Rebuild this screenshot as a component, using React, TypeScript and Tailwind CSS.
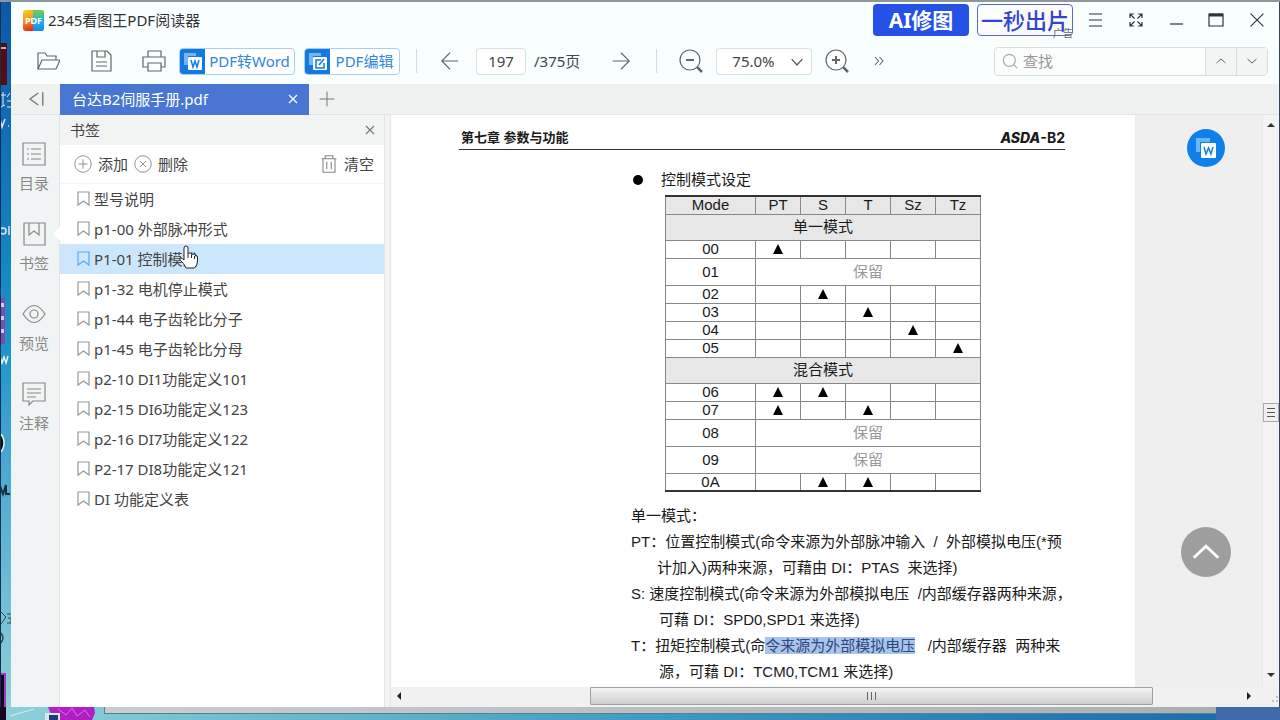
import { FC, ReactNode } from "react";

interface IconProps {
    className?: string;
    children: ReactNode;
    size?: number;
}

// thin line icons drawn on a 24px grid
const Icon: FC<IconProps> = ({ className = "", size = 24, children }) => (
    <svg
        width={size}
        height={size}
        viewBox="0 0 24 24"
        fill="none"
        stroke="currentColor"
        strokeWidth="1.2"
        className={`shrink-0 ${className}`}
        aria-hidden="true"
    >
        {children}
    </svg>
);

const bookmarks = [
    "型号说明",
    "p1-00 外部脉冲形式",
    "P1-01 控制模式",
    "p1-32 电机停止模式",
    "p1-44 电子齿轮比分子",
    "p1-45 电子齿轮比分母",
    "p2-10 DI1功能定义101",
    "p2-15 DI6功能定义123",
    "p2-16 DI7功能定义122",
    "P2-17 DI8功能定义121",
    "DI 功能定义表",
];

const columns = ["PT", "S", "T", "Sz", "Tz"];

interface ModeRow {
    mode?: string;
    section?: string;
    reserved?: boolean;
    marks?: string[];
}

const modes: ModeRow[] = [
    { section: "单一模式" },
    { mode: "00", marks: ["PT"] },
    { mode: "01", reserved: true },
    { mode: "02", marks: ["S"] },
    { mode: "03", marks: ["T"] },
    { mode: "04", marks: ["Sz"] },
    { mode: "05", marks: ["Tz"] },
    { section: "混合模式" },
    { mode: "06", marks: ["PT", "S"] },
    { mode: "07", marks: ["PT", "T"] },
    { mode: "08", reserved: true },
    { mode: "09", reserved: true },
    { mode: "0A", marks: ["S", "T"] },
];

const railItems = [
    {
        label: "目录",
        icon: <><path d="M1 1h22v22H1z" /><path d="M5 7h2M9 7h10M5 12h2M9 12h10M5 17h2M9 17h10" /></>,
    },
    {
        label: "书签",
        active: true,
        icon: <><path d="M2 1h21v22H2z" /><path d="M7 1v12l5-4 5 4V1" /></>,
    },
    {
        label: "预览",
        icon: <><path d="M1 12q11-17 22 0q-11 17-22 0z" /><circle cx="12" cy="12" r="4" /></>,
    },
    {
        label: "注释",
        icon: <><path d="M1 1h22v18H11l-4 4v-4H1z" /><path d="M5 7h14M5 11h14M5 15h9" /></>,
    },
];

const Desktop: FC = () => (
    <div className="w-[11px] shrink-0 overflow-hidden bg-linear-to-b from-[#0d57a8] via-[#1c96cc] to-[#8dd0d8]" aria-hidden="true">
        <svg width="11" height="705" viewBox="0 2 11 705">
            <rect y="43" width="7" height="42" fill="#5a0a10" />
            <rect y="43" width="7" height="2" fill="#222" />
            <rect y="47" width="6" height="2" fill="#c9a8a8" />
            <path d="M1 95h5M3 92v14M7 97l3-4M7 101h4M1 107l4-2M7 107h4" stroke="#dfe9f2" fill="none" />
            <path d="M0 119l2 8 3-8M8 126h1" stroke="#dfe9f2" strokeWidth="1.5" fill="none" />
            <circle cx="3" cy="231" r="3" stroke="#dfe9f2" strokeWidth="1.5" fill="none" />
            <path d="M9 226v9" stroke="#dfe9f2" strokeWidth="1.5" />
            <rect y="298" width="5" height="46" fill="#7a4fa8" />
            <path d="M0 305h4M0 318h4M0 331h4" stroke="#d9c8ee" strokeWidth="4" />
            <path d="M0 356l2 7 2-6 2 6 2-7" stroke="#eef4f8" strokeWidth="1.5" fill="none" />
            <circle cx="-10" cy="443" r="14" stroke="#eef4f8" strokeWidth="1.5" fill="#0b0d12" />
            <path d="M0 486l3 8 3-9v9h4" stroke="#16303a" strokeWidth="2" fill="none" />
            <path d="M1 612l5 5-5 7M7 614h4M8 618h3v5H7" stroke="#31474d" fill="none" />
            <path d="M0 632q6 6 0 12" stroke="#31474d" strokeWidth="1.5" fill="none" />
            <rect y="673" width="6" height="34" fill="#a040b8" />
            <rect y="675" width="4" height="32" fill="#1a0420" />
            <rect y="2" width="1" height="705" fill="#0c2f52" />
        </svg>
    </div>
);

const TitleBar: FC = () => (
    <header className="flex h-[38px] items-center pr-[11px] pb-[2px] pl-3">
        <svg width="21" height="21" viewBox="0 0 21 21" className="shrink-0" aria-hidden="true">
            <defs>
                <linearGradient id="warm" x1="0" y1="0" x2="0.3" y2="1">
                    <stop offset="0" stopColor="#f6d21c" />
                    <stop offset="0.5" stopColor="#f7941e" />
                    <stop offset="1" stopColor="#e8291c" />
                </linearGradient>
                <linearGradient id="cool" x1="0" y1="0" x2="0" y2="1">
                    <stop offset="0" stopColor="#7ccf3a" />
                    <stop offset="0.5" stopColor="#19b5e6" />
                    <stop offset="1" stopColor="#1c86f0" />
                </linearGradient>
            </defs>
            <rect width="21" height="21" rx="3" fill="url(#warm)" />
            <path d="M10 0h8a3 3 0 013 3v15a3 3 0 01-3 3h-8z" fill="url(#cool)" />
            <text x="10.5" y="14" fontSize="9" fontWeight="700" fill="#fff" textAnchor="middle">PDF</text>
        </svg>
        <h1 className="ml-1 text-[15px] leading-5 text-[#333]">2345看图王PDF阅读器</h1>
        <div className="ml-auto flex items-center">
            <button className="h-8 w-24 rounded bg-[#2451e6] text-[21px] leading-8 font-bold text-white">AI修图</button>
            <button className="relative ml-2 h-8 w-24 rounded-sm border border-[#5a6ad0] bg-[#fbfcff] text-[22px] leading-[30px] font-medium whitespace-nowrap text-[#3344cc]">
                一秒出片
                <span className="absolute -right-px -bottom-1 text-[10px] leading-3 font-normal text-[#666]">广告</span>
            </button>
        </div>
        <div className="ml-[11px] flex items-center gap-4 text-[#333]">
            <button aria-label="菜单">
                <Icon><path d="M5 6h13M5 12h13M5 18h13" /></Icon>
            </button>
            <button aria-label="全屏">
                <Icon><path d="M6 10V6h4M14 6h4v4M18 14v4h-4M10 18H6v-4M6 6l4.500 4.500M18 6l-4.500 4.500M18 18l-4.500-4.500M6 18l4.500-4.500" /></Icon>
            </button>
            <button aria-label="最小化">
                <Icon><path d="M6 16h13" /></Icon>
            </button>
            <button aria-label="最大化">
                <Icon><path d="M5 6h14v12H5z" /><path d="M5 7h14" strokeWidth="3" /></Icon>
            </button>
        </div>
        <button aria-label="关闭" className="ml-[18px] text-[#333]">
            <Icon size={22}><path d="M5 5l14 14M19 5L5 19" /></Icon>
        </button>
    </header>
);

interface PromoProps {
    label: string;
    width: string;
    children: ReactNode;
}

const PromoButton: FC<PromoProps> = ({ label, width, children }) => (
    <button className={`flex h-[27px] items-center overflow-hidden rounded-sm border border-[#a9cdf3] bg-white text-[#2f86dc] ${width}`}>
        <svg width="25" height="27" viewBox="0 0 25 27" className="shrink-0" aria-hidden="true">
            <rect width="25" height="27" fill="#1179e0" />
            <path d="M4 5h12v3H8v9H4z" fill="#78b4f2" />
            <rect x="8" y="9" width="14" height="13" rx="1" fill="#fff" />
            {children}
        </svg>
        <span className="flex-1 text-center text-[15px] leading-6 whitespace-nowrap">{label}</span>
    </button>
);

const Toolbar: FC = () => (
    <div className="flex h-11 items-center pr-[11px] pb-[2px] pl-[25px] text-[#666]">
        <div className="flex items-center gap-[29px]">
            <button aria-label="打开">
                <Icon><path d="M2 20V4h7l2 3h9v4M2 20L6 11h18l-4 9z" /></Icon>
            </button>
            <button aria-label="保存">
                <Icon><path d="M3 2h15l4 4v16H3zM8 2v6h8V2M7 13h11M7 17h11" /></Icon>
            </button>
            <button aria-label="打印">
                <Icon><path d="M6 8V2h13v6M6 18H1V8h22v10h-4M6 14h13v8H6z" /></Icon>
            </button>
        </div>
        <div className="ml-[13px] flex gap-[9px]">
            <PromoButton label="PDF转Word" width="w-[116px]">
                <path d="M11 12l2 7 2-6 2 6 2-7" fill="none" stroke="#1179e0" strokeWidth="1.5" />
            </PromoButton>
            <PromoButton label="PDF编辑" width="w-24">
                <path d="M16 12h-5v8h8v-5M14 17l5-6" fill="none" stroke="#1179e0" strokeWidth="1.5" />
            </PromoButton>
        </div>
        <span className="ml-4 h-6 w-px bg-[#d9dcdd]" />
        <button aria-label="上一页" className="ml-[22px]">
            <Icon size={22}><path d="M21 12H3M12 3l-9 9 9 9" /></Icon>
        </button>
        <input
            aria-label="页码"
            defaultValue="197"
            className="ml-[15px] h-[27px] w-[50px] rounded-sm border border-[#dcdfe0] bg-white text-center text-[15px] text-[#444]"
        />
        <span className="ml-2 text-[15px] leading-5 text-[#444]">/375页</span>
        <button aria-label="下一页" className="ml-[30px]">
            <Icon size={22}><path d="M3 12h18M12 3l9 9-9 9" /></Icon>
        </button>
        <span className="ml-6 h-6 w-px bg-[#d9dcdd]" />
        <button aria-label="缩小" className="ml-[22px]">
            <Icon><circle cx="11" cy="11" r="10" /><path d="M7 11h8" strokeWidth="2" /><path d="M18 18l5 5" strokeWidth="2.500" /></Icon>
        </button>
        <div className="relative ml-[13px]">
            <select
                aria-label="缩放比例"
                defaultValue="75.0%"
                className="h-[27px] w-24 appearance-none rounded-sm border border-[#dcdfe0] bg-white pl-[15px] text-[15px] text-[#444]"
            >
                <option>50.0%</option>
                <option>75.0%</option>
                <option>100.0%</option>
            </select>
            <Icon size={14} className="pointer-events-none absolute top-[7px] right-2 text-[#555]">
                <path d="M3 7l9 10 9-10" strokeWidth="2.200" />
            </Icon>
        </div>
        <button aria-label="放大" className="ml-[13px]">
            <Icon><circle cx="11" cy="11" r="10" /><path d="M7 11h8M11 7v8" strokeWidth="2" /><path d="M18 18l5 5" strokeWidth="2.500" /></Icon>
        </button>
        <button aria-label="更多工具" className="ml-6">
            <Icon size={12}><path d="M4 4l7 8-7 8M13 4l7 8-7 8" strokeWidth="2.200" /></Icon>
        </button>
        <form className="ml-auto flex h-[29px] w-[274px] items-center rounded-sm border border-[#d9dcdd] bg-[#fbfdfd]">
            <Icon size={16} className="ml-[7px] text-[#aaa]">
                <circle cx="11" cy="11" r="9" strokeWidth="1.800" /><path d="M17 17l6 6" strokeWidth="1.800" />
            </Icon>
            <input aria-label="查找" placeholder="查找" className="ml-[5px] min-w-0 flex-1 bg-transparent text-[15px] placeholder:text-[#999]" />
            <button type="button" aria-label="查找上一个" className="grid h-full w-[31px] place-items-center border-l border-[#d9dcdd] bg-[#f3f5f5]">
                <Icon size={12}><path d="M3 16l9-8 9 8" strokeWidth="2" /></Icon>
            </button>
            <button type="button" aria-label="查找下一个" className="grid h-full w-[31px] place-items-center border-l border-[#d9dcdd] bg-[#f3f5f5]">
                <Icon size={12}><path d="M3 8l9 8 9-8" strokeWidth="2" /></Icon>
            </button>
        </form>
    </div>
);

const TabStrip: FC = () => (
    <div className="flex h-[31px] items-center border-b border-[#e2e5e5] bg-[#f0f2f2] text-[#777]">
        <button aria-label="收起侧栏" className="grid w-[49px] place-items-center">
            <Icon size={18}><path d="M15 4L4 12l11 8M21 3v18" strokeWidth="1.800" /></Icon>
        </button>
        <div className="flex h-[31px] w-[249px] items-center justify-between bg-[#4876d2] pr-[10px] pl-3 text-white">
            <a href="#doc" className="text-[15px] leading-5">台达B2伺服手册.pdf</a>
            <button aria-label="关闭标签">
                <Icon size={12}><path d="M4 4l16 16M20 4L4 20" strokeWidth="2.500" /></Icon>
            </button>
        </div>
        <button aria-label="新建标签" className="ml-[10px]">
            <Icon size={16}><path d="M12 1v22M1 12h22" strokeWidth="1.500" /></Icon>
        </button>
    </div>
);

const SideRail: FC = () => (
    <nav className="flex w-[49px] shrink-0 flex-col gap-[29px] border-r border-[#e2e5e5] bg-[#f1f4f4] pt-[27px] text-[#888]">
        {railItems.map((item) => (
            <button key={item.label} className="relative flex flex-col items-center gap-[7px] pr-[2px]">
                <Icon>{item.icon}</Icon>
                <span className="text-[15px] leading-5">{item.label}</span>
                {item.active && (
                    <svg width="7" height="14" viewBox="0 0 7 14" className="absolute top-[5px] -right-px" aria-hidden="true">
                        <path d="M7 0L0 7l7 7z" fill="#fff" />
                    </svg>
                )}
            </button>
        ))}
    </nav>
);

const BookmarkPanel: FC = () => (
    <aside className="w-[325px] shrink-0 border-r border-[#e2e5e5] bg-white text-[15px] leading-5 text-[#444]">
        <div className="flex h-[30px] items-center justify-between bg-[#f2f3f3] pr-2 pl-[10px]">
            <h2>书签</h2>
            <button aria-label="关闭书签" className="text-[#777]">
                <Icon size={12}><path d="M4 4l16 16M20 4L4 20" strokeWidth="2.200" /></Icon>
            </button>
        </div>
        <div className="flex h-[39px] items-center border-b border-[#f3f4f4] pr-[10px] pl-[14px]">
            <button className="flex items-center gap-[6px]">
                <Icon size={18} className="text-[#888]"><circle cx="12" cy="12" r="11" /><path d="M12 6v12M6 12h12" /></Icon>
                添加
            </button>
            <button className="ml-[6px] flex items-center gap-[6px]">
                <Icon size={18} className="text-[#888]"><circle cx="12" cy="12" r="11" /><path d="M8 8l8 8M16 8l-8 8" /></Icon>
                删除
            </button>
            <button className="ml-auto flex items-center gap-[6px]">
                <Icon size={18} className="text-[#888]"><path d="M2 5h20M4 5v18h16V5M7 5V1h10v4M9 9v10M15 9v10" strokeWidth="1.500" /></Icon>
                清空
            </button>
        </div>
        <ul>
            {bookmarks.map((name, i) => (
                <li key={name} className={i === 2 ? "relative bg-[#cce6fd]" : ""}>
                    <a href="#doc" className="flex h-[30px] items-center gap-1 pl-[17px]">
                        <svg width="13" height="16" viewBox="0 0 13 16" fill="none" stroke={i === 2 ? "#5aa9ee" : "#999"} strokeWidth="1.2" aria-hidden="true">
                            <path d="M1 1h11v13l-5.500-4L1 14z" />
                        </svg>
                        {name}
                    </a>
                    {i === 2 && (
                        <svg width="20" height="24" viewBox="0 0 20 24" className="absolute top-px left-[118px]" aria-hidden="true">
                            <path
                                d="M6 14V3q0-2 2-2t2 2v6q0-1 2-1t2 2q0-1 2-1t1.500 2q2-1 2 1v4q0 4-3 7H8q-2-5-6-8-1-2 1-2 1 0 3 2z"
                                fill="#fff"
                                stroke="#222"
                            />
                            <path d="M10 9v4M13.500 10v3M16.500 11v3" stroke="#222" />
                        </svg>
                    )}
                </li>
            ))}
        </ul>
    </aside>
);

const ModeTable: FC = () => (
    <table className="ml-[34px] w-[315px] table-fixed border-collapse border-x border-y-2 border-x-[#888] border-y-[#333] text-center text-[15px] leading-4">
        <thead>
            <tr className="h-[18px] bg-[#e7e7e7]">
                <th className="w-[90px] border border-t-0 border-[#888] p-0 font-normal">Mode</th>
                {columns.map((col) => (
                    <th key={col} className="w-[45px] border border-t-0 border-[#888] p-0 font-normal">{col}</th>
                ))}
            </tr>
        </thead>
        <tbody>
            {modes.map((row, key) =>
                row.section ? (
                    <tr key={key} className="h-[26px] bg-[#e7e7e7]">
                        <th colSpan={6} className="border border-[#888] p-0 font-normal">{row.section}</th>
                    </tr>
                ) : row.reserved ? (
                    <tr key={key} className="h-[27px]">
                        <td className="border border-[#888] p-0">{row.mode}</td>
                        <td colSpan={5} className="border border-[#888] p-0 text-[#999]">保留</td>
                    </tr>
                ) : (
                    <tr key={key} className="h-[18px]">
                        <td className="border border-[#888] p-0">{row.mode}</td>
                        {columns.map((col) => (
                            <td key={col} className="border border-[#888] p-0">
                                {row.marks?.includes(col) && (
                                    <svg width="10" height="10" viewBox="0 0 10 10" className="mx-auto" role="img" aria-label="是">
                                        <path d="M5 0L10 10H0z" />
                                    </svg>
                                )}
                            </td>
                        ))}
                    </tr>
                )
            )}
        </tbody>
    </table>
);

const DocumentPage: FC = () => (
    <article
        id="doc"
        className="min-w-0 flex-1 overflow-hidden bg-white pt-3 pr-[70px] pl-[68px] font-['Liberation_Sans','Noto_Sans_CJK_SC',sans-serif] text-[#1a1a1a]"
    >
        <div className="flex items-center justify-between border-b border-[#333] pb-px text-[13px] leading-[21px] font-bold">
            <span className="pl-[2px] whitespace-pre">第七章 参数与功能</span>
            <span className="font-['Inter','Liberation_Sans',sans-serif] text-[14px]">
                <i className="font-extrabold">ASDA</i>-B2
            </span>
        </div>
        <div className="mt-[18px] pl-[172px]">
            <h3 className="flex items-center pl-[2px] text-[15px] leading-6">
                <span className="mr-[18px] size-[10px] rounded-full bg-black" />
                控制模式设定
            </h3>
            <div className="pt-[3px]">
                <ModeTable />
            </div>
            <div className="mt-[11px] text-[15px] leading-[26px] whitespace-pre">
                <p>单一模式：</p>
                <p>PT：位置控制模式(命令来源为外部脉冲输入  /  外部模拟电压(*预</p>
                <p className="pl-[26px]">计加入)两种来源，可藉由 DI：PTAS  来选择)</p>
                <p>S: 速度控制模式(命令来源为外部模拟电压  /内部缓存器两种来源，</p>
                <p className="pl-7">可藉 DI：SPD0,SPD1 来选择)</p>
                <p>T：扭矩控制模式(命<mark className="bg-[#a9c4ea] text-[#2c4a7c]">令来源为外部模拟电压</mark>   /内部缓存器  两种来</p>
                <p className="pl-7">源，可藉 DI：TCM0,TCM1 来选择)</p>
            </div>
        </div>
    </article>
);

const Viewer: FC = () => (
    <div className="flex min-w-0 flex-1 flex-col">
        <div className="flex min-h-0 flex-1">
            <DocumentPage />
            <div className="flex w-[127px] shrink-0 flex-col items-end justify-between bg-[#efefef] pt-[14px] pr-[31px] pb-[110px]">
                <button aria-label="转Word" className="mr-[6px] grid size-[38px] place-items-center rounded-full bg-[#0f80ea]">
                    <svg width="20" height="20" viewBox="0 0 20 20" aria-hidden="true">
                        <path d="M0 0h14v4H4v10H0z" fill="#6db6f5" />
                        <rect x="5" y="5" width="15" height="15" rx="1" fill="#fff" />
                        <path d="M8 9l2 7 2.500-6 2.500 6 2-7" fill="none" stroke="#0f80ea" strokeWidth="1.5" />
                    </svg>
                </button>
                <button aria-label="返回顶部" className="grid size-[50px] place-items-center rounded-full bg-[#9e9e9e] text-white">
                    <Icon size={28}><path d="M1.500 17L12 7l10.500 10" strokeWidth="2.400" /></Icon>
                </button>
            </div>
            <div className="flex w-[17px] shrink-0 flex-col items-center border-l border-[#e8e8e8] bg-[#f3f3f3]">
                <button aria-label="向上滚动" className="grid h-5 w-full place-items-center">
                    <svg width="8" height="4" viewBox="0 0 8 4" aria-hidden="true"><path d="M4 0l4 4H0z" fill="#333" /></svg>
                </button>
                <div className="grow-[268]" />
                <div className="flex h-[19px] w-full flex-col items-center justify-center gap-[3px] border border-[#aaa] bg-[#f0f0f0]">
                    <span className="h-px w-2 bg-[#555]" />
                    <span className="h-px w-2 bg-[#555]" />
                    <span className="h-px w-2 bg-[#555]" />
                </div>
                <div className="grow-[241]" />
                <button aria-label="向下滚动" className="grid h-6 w-full place-items-center">
                    <svg width="8" height="4" viewBox="0 0 8 4" aria-hidden="true"><path d="M0 0h8L4 4z" fill="#333" /></svg>
                </button>
            </div>
        </div>
        <div className="flex h-5 shrink-0 items-center bg-[#f1f1f1] pb-[2px]">
            <button aria-label="向左滚动" className="grid h-full w-4 place-items-center">
                <svg width="4" height="8" viewBox="0 0 4 8" aria-hidden="true"><path d="M4 0v8L0 4z" fill="#222" /></svg>
            </button>
            <div className="grow-[185]" />
            <div className="flex h-[18px] grow-[560] items-center justify-center gap-[3px] rounded-[1px] border border-[#a0a0a0] bg-linear-to-b from-[#f4f4f4] to-[#cfcfcf]">
                <span className="h-2 w-px bg-[#666]" />
                <span className="h-2 w-px bg-[#666]" />
                <span className="h-2 w-px bg-[#666]" />
            </div>
            <div className="grow-[89]" />
            <button aria-label="向右滚动" className="grid h-full w-4 place-items-center">
                <svg width="4" height="8" viewBox="0 0 4 8" aria-hidden="true"><path d="M0 0l4 4-4 4z" fill="#222" /></svg>
            </button>
            <svg width="22" height="18" viewBox="0 0 22 18" className="shrink-0" aria-hidden="true">
                <path d="M19 9h2v2h-2zM15 13h2v2h-2zM19 13h2v2h-2z" fill="#c4c4c4" />
            </svg>
        </div>
    </div>
);

const Taskbar: FC = () => (
    <div className="flex h-[13px] shrink-0 bg-linear-to-r from-[#8dd0d8] via-[#3f9cc0] to-[#1d66a8]" aria-hidden="true">
        <svg width="104" height="13" viewBox="0 0 104 13" className="shrink-0">
            <rect width="6" height="13" fill="#1a0420" />
            <path d="M10 9L34 2" stroke="#d4eef0" />
            <path d="M48 0h46l1 6-3 7H60L50 5z" fill="#b01fc4" />
            <path d="M58 2l8 6 6-7 5 8 8-6 5 7" stroke="#e36af0" fill="none" />
            <rect x="45" y="6" width="15" height="7" fill="#dfe6ee" />
            <rect x="49" y="8" width="9" height="5" fill="#1c3c7c" />
        </svg>
        <div className="h-[7px] flex-1 border-b border-l border-[#5d7c8c] bg-linear-to-r from-[#c9cdce] to-[#a9b0b4]" />
        <div className="w-16 bg-[#3f69a8]" />
    </div>
);

export default function App() {
    return (
        <div className="flex h-screen min-h-[600px] flex-col overflow-hidden bg-[#33475a] font-['Noto_Sans','Noto_Sans_CJK_SC',sans-serif]">
            <div className="h-[2px] shrink-0 bg-[#8d979b]" />
            <div className="flex min-h-0 flex-1 pr-px">
                <Desktop />
                <main className="flex min-w-0 flex-1 flex-col bg-[#f9feff]">
                    <TitleBar />
                    <Toolbar />
                    <TabStrip />
                    <div className="flex min-h-0 flex-1">
                        <SideRail />
                        <BookmarkPanel />
                        <div className="w-[6px] shrink-0 border-r border-[#e2e5e5] bg-[#f2f3f3]" />
                        <Viewer />
                    </div>
                </main>
            </div>
            <Taskbar />
        </div>
    );
}
